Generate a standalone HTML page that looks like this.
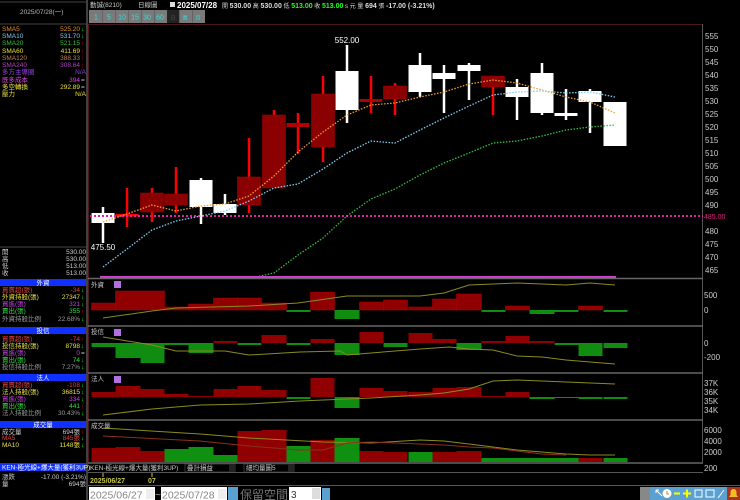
<!DOCTYPE html>
<html><head><meta charset="utf-8"><style>
html,body{margin:0;padding:0;background:#000;width:740px;height:500px;overflow:hidden}
svg{display:block}
text{font-family:"Liberation Sans","Noto Sans CJK TC",sans-serif}
.s{font-size:6.5px}
.ax{font-size:8px;fill:#ccc}
</style></head><body>
<svg width="740" height="500" viewBox="0 0 740 500" xmlns="http://www.w3.org/2000/svg">
<rect width="740" height="500" fill="#000"/>
<line x1="87" y1="0" x2="87" y2="500" stroke="#555" stroke-width="1.5"/>
<line x1="0" y1="2" x2="87" y2="2" stroke="#444"/>
<line x1="0" y1="24" x2="87" y2="24" stroke="#444"/>
<text x="20" y="14" class="s" fill="#bbb">2025/07/28(一)</text>
<g class="s">
<text x="2" y="31" fill="#e0902a">SMA5</text><text x="80" y="31" fill="#e0902a" text-anchor="end">525.20</text><text x="81" y="31" fill="#0f0">↓</text>
<text x="2" y="38" fill="#7ac8e8">SMA10</text><text x="80" y="38" fill="#7ac8e8" text-anchor="end">531.70</text><text x="81" y="38" fill="#0f0">↓</text>
<text x="2" y="45" fill="#2fc03a">SMA20</text><text x="80" y="45" fill="#2fc03a" text-anchor="end">521.15</text><text x="81" y="45" fill="#f00">↑</text>
<text x="2" y="53" fill="#e8e040">SMA60</text><text x="80" y="53" fill="#e8e040" text-anchor="end">411.69</text><text x="81" y="53" fill="#f00">↑</text>
<text x="2" y="60" fill="#c08050">SMA120</text><text x="80" y="60" fill="#c08050" text-anchor="end">388.33</text><text x="81" y="60" fill="#f00">↑</text>
<text x="2" y="67" fill="#b040c0">SMA240</text><text x="80" y="67" fill="#b040c0" text-anchor="end">308.64</text><text x="81" y="67" fill="#f00">↑</text>
<text x="2" y="74" fill="#9040e0">多方主導圈</text><text x="86" y="74" fill="#9040e0" text-anchor="end">N/A</text>
<text x="2" y="82" fill="#e040e0">既多成本</text><text x="80" y="82" fill="#e040e0" text-anchor="end">394</text><text x="81" y="82" fill="#ccc">=</text>
<text x="2" y="89" fill="#e8e040">多空轉換</text><text x="80" y="89" fill="#e8e040" text-anchor="end">292.89</text><text x="81" y="89" fill="#ccc">=</text>
<text x="2" y="96" fill="#e8e040">壓力</text><text x="86" y="96" fill="#e8e040" text-anchor="end">N/A</text>
</g>
<line x1="0" y1="247" x2="87" y2="247" stroke="#444"/>
<g class="s" fill="#ccc">
<text x="2" y="254">開</text><text x="86" y="254" text-anchor="end">530.00</text>
<text x="2" y="261">高</text><text x="86" y="261" text-anchor="end">530.00</text>
<text x="2" y="268">低</text><text x="86" y="268" text-anchor="end">513.00</text>
<text x="2" y="275">收</text><text x="86" y="275" text-anchor="end">513.00</text>
</g>
<g class="s">
<rect x="0" y="279" width="86" height="7" fill="#1030ff"/><text x="43" y="285" fill="#fff" text-anchor="middle">外資</text>
<text x="2" y="292" fill="#e04040">買賣超(張)</text><text x="80" y="292" fill="#e04040" text-anchor="end">-34</text><text x="81" y="292" fill="#0f0">↓</text>
<text x="2" y="299" fill="#e8e040">外資持股(張)</text><text x="80" y="299" fill="#e8e040" text-anchor="end">27347</text><text x="81" y="299" fill="#0f0">↓</text>
<text x="2" y="306" fill="#c040e0">買進(張)</text><text x="80" y="306" fill="#c040e0" text-anchor="end">321</text><text x="81" y="306" fill="#0f0">↓</text>
<text x="2" y="313" fill="#2fe040">賣出(張)</text><text x="80" y="313" fill="#2fe040" text-anchor="end">355</text><text x="81" y="313" fill="#f00">↑</text>
<text x="2" y="321" fill="#999">外資持股比例</text><text x="80" y="321" fill="#999" text-anchor="end">22.68%</text><text x="81" y="321" fill="#0f0">↓</text>
<rect x="0" y="327" width="86" height="7" fill="#1030ff"/><text x="43" y="333" fill="#fff" text-anchor="middle">投信</text>
<text x="2" y="341" fill="#e04040">買賣超(張)</text><text x="80" y="341" fill="#e04040" text-anchor="end">-74</text><text x="81" y="341" fill="#f00">↑</text>
<text x="2" y="348" fill="#e8e040">投信持股(張)</text><text x="80" y="348" fill="#e8e040" text-anchor="end">8798</text><text x="81" y="348" fill="#0f0">↓</text>
<text x="2" y="355" fill="#c040e0">買進(張)</text><text x="80" y="355" fill="#c040e0" text-anchor="end">0</text><text x="81" y="355" fill="#ccc">=</text>
<text x="2" y="362" fill="#2fe040">賣出(張)</text><text x="80" y="362" fill="#2fe040" text-anchor="end">74</text><text x="81" y="362" fill="#0f0">↓</text>
<text x="2" y="369" fill="#999">投信持股比例</text><text x="80" y="369" fill="#999" text-anchor="end">7.27%</text><text x="81" y="369" fill="#0f0">↓</text>
<rect x="0" y="374" width="86" height="7" fill="#1030ff"/><text x="43" y="380" fill="#fff" text-anchor="middle">法人</text>
<text x="2" y="387" fill="#e04040">買賣超(張)</text><text x="80" y="387" fill="#e04040" text-anchor="end">-108</text><text x="81" y="387" fill="#0f0">↓</text>
<text x="2" y="394" fill="#e8e040">法人持股(張)</text><text x="80" y="394" fill="#e8e040" text-anchor="end">36815</text><text x="81" y="394" fill="#0f0">↓</text>
<text x="2" y="401" fill="#c040e0">買進(張)</text><text x="80" y="401" fill="#c040e0" text-anchor="end">334</text><text x="81" y="401" fill="#0f0">↓</text>
<text x="2" y="408" fill="#2fe040">賣出(張)</text><text x="80" y="408" fill="#2fe040" text-anchor="end">441</text><text x="81" y="408" fill="#f00">↑</text>
<text x="2" y="415" fill="#999">法人持股比例</text><text x="80" y="415" fill="#999" text-anchor="end">30.43%</text><text x="81" y="415" fill="#0f0">↓</text>
<rect x="0" y="421" width="86" height="7" fill="#1030ff"/><text x="43" y="427" fill="#fff" text-anchor="middle">成交量</text>
<text x="2" y="434" fill="#ccc">成交量</text><text x="80" y="434" fill="#ccc" text-anchor="end">694張</text><text x="81" y="434" fill="#f00">↑</text>
<text x="2" y="440" fill="#e04040">MA5</text><text x="80" y="440" fill="#e04040" text-anchor="end">845張</text><text x="81" y="440" fill="#0f0">↓</text>
<text x="2" y="447" fill="#e8e040">MA10</text><text x="80" y="447" fill="#e8e040" text-anchor="end">1148張</text><text x="81" y="447" fill="#0f0">↓</text>
<rect x="0" y="463" width="86" height="8" fill="#1030ff"/><text x="2" y="469.5" fill="#fff">KEN-極光線+爆大量(獲利3UP)</text>
<text x="2" y="479" fill="#ccc">漲跌</text><text x="86" y="479" fill="#ccc" text-anchor="end">-17.00 (-3.21%)</text>
<text x="2" y="486" fill="#ccc">量</text><text x="86" y="486" fill="#ccc" text-anchor="end">694張</text>
</g>
<g class="s" fill="#ccc">
<text x="90" y="7">勤誠(8210)</text><text x="138" y="7">日線圖</text>
</g>
<rect x="170" y="2" width="5" height="5" fill="#ddd"/>
<text x="177" y="8" font-size="8" font-weight="bold" fill="#fff">2025/07/28</text>
<text x="222" y="8" font-size="6" fill="#ddd">開 <tspan font-size="7" font-weight="bold">530.00</tspan> 高 <tspan font-size="7" font-weight="bold">530.00</tspan> 低 <tspan font-size="7" font-weight="bold" fill="#2f2">513.00</tspan> 收 <tspan font-size="7" font-weight="bold" fill="#2f2">513.00</tspan> s 元 量 <tspan font-size="7" font-weight="bold">694</tspan> 張 <tspan font-size="7" font-weight="bold">-17.00 (-3.21%)</tspan></text>
<g font-size="7" fill="#30e0e0" text-anchor="middle">
<rect x="89" y="10" width="116" height="13" fill="#7a7a7a"/>
<rect x="167" y="10" width="12" height="13" fill="#222"/>
<text x="96" y="19.5">1</text><text x="109" y="19.5">5</text><text x="122" y="19.5">10</text><text x="135" y="19.5">15</text><text x="147" y="19.5">30</text><text x="160" y="19.5">60</text>
<text x="173" y="19.5" fill="#555" font-size="5">日</text><text x="185" y="19.5" font-size="5">週</text><text x="198" y="19.5" font-size="5">月</text>
<g stroke="#555" stroke-width=".6"><line x1="102.5" y1="10" x2="102.5" y2="23"/><line x1="115.5" y1="10" x2="115.5" y2="23"/><line x1="128.5" y1="10" x2="128.5" y2="23"/><line x1="141.5" y1="10" x2="141.5" y2="23"/><line x1="154.5" y1="10" x2="154.5" y2="23"/><line x1="179.5" y1="10" x2="179.5" y2="23"/><line x1="192.5" y1="10" x2="192.5" y2="23"/></g>
</g>
<line x1="88" y1="24.5" x2="703" y2="24.5" stroke="#4a1820"/>
<line x1="88.5" y1="24" x2="88.5" y2="463" stroke="#4a1820"/>
<line x1="702.5" y1="24" x2="702.5" y2="463" stroke="#555"/>
<g class="ax">
<text x="705" y="39">555</text><text x="705" y="52">550</text><text x="705" y="65">545</text><text x="705" y="78">540</text><text x="705" y="91">535</text><text x="705" y="104">530</text><text x="705" y="117">525</text><text x="705" y="130">520</text><text x="705" y="143">515</text><text x="705" y="156">510</text><text x="705" y="169">505</text><text x="705" y="182">500</text><text x="705" y="195">495</text><text x="705" y="208">490</text><text x="705" y="234">480</text><text x="705" y="247">475</text><text x="705" y="260">470</text><text x="705" y="273">465</text>
</g>
<text x="704" y="219" font-size="7" fill="#e02080">485.00</text>
<line x1="90" y1="216" x2="703" y2="216" stroke="#e020a0" stroke-width="2" stroke-dasharray="2,2"/>
<g>
<g stroke-width="2.5">
<line x1="103" y1="207" x2="103" y2="243" stroke="#fff"/>
<line x1="127" y1="188" x2="127" y2="227" stroke="#f00"/>
<line x1="152" y1="188" x2="152" y2="222" stroke="#f00"/>
<line x1="176" y1="167" x2="176" y2="213" stroke="#f00"/>
<line x1="201" y1="178" x2="201" y2="224" stroke="#fff"/>
<line x1="225" y1="194" x2="225" y2="215" stroke="#fff"/>
<line x1="249" y1="138" x2="249" y2="213" stroke="#f00"/>
<line x1="274" y1="110" x2="274" y2="188" stroke="#f00"/>
<line x1="298" y1="113" x2="298" y2="154" stroke="#f00"/>
<line x1="323" y1="76" x2="323" y2="162" stroke="#f00"/>
<line x1="347" y1="45" x2="347" y2="123" stroke="#fff"/>
<line x1="371" y1="76" x2="371" y2="113" stroke="#f00"/>
<line x1="395" y1="83" x2="395" y2="115" stroke="#f00"/>
<line x1="420" y1="53" x2="420" y2="97" stroke="#fff"/>
<line x1="444" y1="65" x2="444" y2="113" stroke="#fff"/>
<line x1="469" y1="63" x2="469" y2="100" stroke="#fff"/>
<line x1="493" y1="76" x2="493" y2="115" stroke="#f00"/>
<line x1="517" y1="79" x2="517" y2="120" stroke="#fff"/>
<line x1="542" y1="63" x2="542" y2="115" stroke="#fff"/>
<line x1="566" y1="89" x2="566" y2="120" stroke="#fff"/>
<line x1="590" y1="89" x2="590" y2="133" stroke="#fff"/>
</g>
<rect x="91.5" y="213" width="23" height="10" fill="#fff"/>
<rect x="115.5" y="214" width="23" height="2.5" fill="#f00"/>
<rect x="140.5" y="193" width="23" height="19" fill="#8b0000" stroke="#a00" stroke-width=".5"/>
<rect x="164.5" y="194" width="23" height="11" fill="#8b0000" stroke="#a00" stroke-width=".5"/>
<rect x="189.5" y="180" width="23" height="27" fill="#fff"/>
<rect x="213.5" y="204" width="23" height="9" fill="#fff"/>
<rect x="237.5" y="177" width="23" height="28" fill="#8b0000" stroke="#a00" stroke-width=".5"/>
<rect x="262.5" y="115" width="23" height="73" fill="#8b0000" stroke="#a00" stroke-width=".5"/>
<rect x="286.5" y="123" width="23" height="4" fill="#b00000"/>
<rect x="311.5" y="94" width="23" height="53" fill="#8b0000" stroke="#a00" stroke-width=".5"/>
<rect x="335.5" y="71" width="23" height="39" fill="#fff"/>
<rect x="359.5" y="99" width="23" height="3" fill="#b00000"/>
<rect x="383.5" y="86" width="23" height="13" fill="#8b0000" stroke="#a00" stroke-width=".5"/>
<rect x="408.5" y="65" width="23" height="27" fill="#fff"/>
<rect x="432.5" y="73" width="23" height="6" fill="#fff"/>
<rect x="457.5" y="65" width="23" height="6" fill="#fff"/>
<rect x="481.5" y="76" width="23" height="11" fill="#8b0000" stroke="#a00" stroke-width=".5"/>
<rect x="505.5" y="87" width="23" height="10" fill="#fff"/>
<rect x="530.5" y="73" width="23" height="40" fill="#fff"/>
<rect x="554.5" y="113" width="23" height="3" fill="#fff"/>
<rect x="578.5" y="91" width="23" height="11" fill="#fff"/>
<rect x="603.5" y="102" width="23" height="44" fill="#fff"/>
</g>
<line x1="90" y1="216" x2="140" y2="216" stroke="#e020a0" stroke-width="2" stroke-dasharray="2,2"/>
<g fill="none" stroke-width="1.3" stroke-dasharray="1.5,1.5">
<polyline stroke="#f0a030" points="103,222 127,214 152,205 176,211 201,206 225,204 249,196 274,176 298,152 323,132 347,115 371,105 395,103 420,97 444,92 469,84 493,80 517,83 542,90 566,97 590,102 615,113"/>
<polyline stroke="#80d0f0" points="103,267 127,249 152,230 176,221 201,216 225,211 249,201 274,188 298,184 323,169 347,153 371,141 395,143 420,130 444,118 469,106 493,95 517,92 542,91 566,93 590,92 615,97"/>
<polyline stroke="#30c040" points="256,277 274,273 298,255 323,238 347,216 371,199 395,189 420,175 444,163 469,153 493,143 517,141 542,136 566,130 590,127 615,125"/>
</g>
<text x="347" y="43" font-size="8" fill="#fff" text-anchor="middle">552.00</text>
<text x="103" y="250" font-size="8" fill="#fff" text-anchor="middle">475.50</text>
<rect x="100" y="276" width="516" height="2.5" fill="#d040d0"/>
<g stroke="#666" stroke-width="1.5">
<line x1="88" y1="278.5" x2="703" y2="278.5"/><line x1="88" y1="326" x2="703" y2="326"/><line x1="88" y1="373" x2="703" y2="373"/><line x1="88" y1="420" x2="703" y2="420"/><line x1="88" y1="463" x2="703" y2="463"/>
</g>
<g class="s" fill="#ccc"><text x="91" y="287">外資</text><text x="91" y="334">投信</text><text x="91" y="381">法人</text><text x="91" y="428">成交量</text></g>
<g fill="#b070e0"><rect x="114" y="281" width="7" height="7"/><rect x="114" y="329" width="7" height="7"/><rect x="114" y="376" width="7" height="7"/></g>
<g fill="#900000" stroke="#b00000" stroke-width=".5">
<rect x="91.5" y="303" width="24" height="7"/><rect x="115.5" y="291" width="49" height="19"/><rect x="164.5" y="307" width="24" height="3"/><rect x="188.5" y="304" width="25" height="6"/><rect x="213.5" y="298" width="24" height="12"/><rect x="237.5" y="298" width="24" height="12"/><rect x="261.5" y="303" width="25" height="7"/><rect x="310.5" y="292" width="24" height="18"/><rect x="359.5" y="302" width="24" height="8"/><rect x="383.5" y="300" width="24" height="10"/><rect x="408.5" y="307" width="24" height="3"/><rect x="432.5" y="299" width="24" height="11"/><rect x="456.5" y="294" width="25" height="16"/><rect x="505.5" y="306" width="24" height="4"/><rect x="578.5" y="306" width="24" height="4"/>
</g>
<g fill="#108c10"><rect x="286.5" y="310" width="24" height="2"/><rect x="334.5" y="310" width="25" height="9"/><rect x="481.5" y="310" width="24" height="2"/><rect x="529.5" y="310" width="25" height="4"/><rect x="554.5" y="310" width="24" height="2"/><rect x="603.5" y="310" width="24" height="2"/></g>
<polyline fill="none" stroke="#8a8a20" points="103,318 152,311 176,308 249,306 298,303 347,296 420,296 444,293 469,285 493,284 517,283 542,284 566,285 590,283 615,285"/>
<g fill="#108c10"><rect x="91.5" y="343" width="24" height="4"/><rect x="115.5" y="343" width="25" height="15"/><rect x="140.5" y="343" width="24" height="20"/><rect x="164.5" y="343" width="24" height="2"/><rect x="188.5" y="343" width="25" height="10"/><rect x="237.5" y="343" width="24" height="2"/><rect x="286.5" y="343" width="24" height="2"/><rect x="334.5" y="343" width="25" height="12"/><rect x="383.5" y="343" width="24" height="4"/><rect x="456.5" y="343" width="25" height="7"/><rect x="554.5" y="343" width="24" height="2"/><rect x="578.5" y="343" width="24" height="13"/><rect x="603.5" y="343" width="24" height="5"/></g>
<g fill="#900000"><rect x="213.5" y="341" width="24" height="2"/><rect x="261.5" y="335" width="25" height="8"/><rect x="310.5" y="339" width="24" height="4"/><rect x="359.5" y="332" width="24" height="11"/><rect x="408.5" y="333" width="24" height="10"/><rect x="432.5" y="339" width="24" height="4"/><rect x="481.5" y="341" width="24" height="2"/><rect x="505.5" y="336" width="24" height="7"/><rect x="529.5" y="341" width="25" height="2"/></g>
<polyline fill="none" stroke="#8a8a20" points="103,337 152,345 176,351 225,351 249,355 300,352 340,351 347,355 371,353 420,349 449,347 469,349 493,350 517,356 542,357 566,360 590,362 615,364"/>
<g fill="#900000"><rect x="91.5" y="392" width="24" height="5"/><rect x="115.5" y="386" width="25" height="11"/><rect x="140.5" y="389" width="24" height="8"/><rect x="164.5" y="394" width="24" height="3"/><rect x="188.5" y="396" width="25" height="1"/><rect x="213.5" y="389" width="24" height="8"/><rect x="237.5" y="386" width="24" height="11"/><rect x="261.5" y="390" width="25" height="7"/><rect x="310.5" y="378" width="24" height="19"/><rect x="359.5" y="388" width="24" height="9"/><rect x="383.5" y="391" width="24" height="6"/><rect x="408.5" y="392" width="24" height="5"/><rect x="432.5" y="388" width="24" height="9"/><rect x="456.5" y="387" width="25" height="10"/><rect x="481.5" y="396" width="24" height="1"/><rect x="505.5" y="392" width="24" height="5"/></g>
<g fill="#108c10"><rect x="286.5" y="397" width="24" height="2"/><rect x="334.5" y="397" width="25" height="11"/><rect x="529.5" y="397" width="25" height="2"/><rect x="554.5" y="397" width="24" height="1"/><rect x="578.5" y="397" width="24" height="2"/><rect x="603.5" y="397" width="24" height="2"/></g>
<polyline fill="none" stroke="#8a8a20" points="103,415 152,409 200,405 249,404 300,401 347,399 371,398 420,395 444,393 469,389 493,381 517,380 542,381 566,382 615,384"/>
<g fill="#900000"><rect x="91.5" y="448" width="24" height="14"/><rect x="115.5" y="447" width="25" height="15"/><rect x="140.5" y="451" width="24" height="11"/><rect x="237.5" y="431" width="24" height="31"/><rect x="261.5" y="430" width="25" height="32"/><rect x="310.5" y="440" width="24" height="22"/><rect x="359.5" y="451" width="24" height="11"/><rect x="383.5" y="452" width="24" height="10"/><rect x="432.5" y="452" width="24" height="10"/><rect x="456.5" y="451" width="25" height="11"/><rect x="578.5" y="458" width="24" height="4"/></g>
<g fill="#109010"><rect x="164.5" y="449" width="24" height="13"/><rect x="188.5" y="447" width="25" height="15"/><rect x="213.5" y="455" width="24" height="7"/><rect x="286.5" y="446" width="24" height="16"/><rect x="334.5" y="438" width="25" height="24"/><rect x="408.5" y="452" width="24" height="10"/><rect x="481.5" y="458" width="24" height="4"/><rect x="505.5" y="458" width="24" height="4"/><rect x="529.5" y="458" width="25" height="4"/><rect x="554.5" y="458" width="24" height="4"/><rect x="603.5" y="458" width="24" height="4"/></g>
<polyline fill="none" stroke="#8a8a20" points="103,428 200,434 249,438 323,442 371,443 420,440 444,441 469,444 493,447 517,450 542,452 566,454 590,455 615,455"/>
<polyline fill="none" stroke="#8a3020" points="103,436 200,441 249,446 298,450 323,450 347,443 371,442 395,443 420,444 444,445 469,447 493,448 517,451 542,454 566,455"/>
<g class="ax"><text x="704" y="298">500</text><text x="704" y="313">0</text><text x="704" y="346">0</text><text x="704" y="360">-200</text><text x="704" y="386">37K</text><text x="704" y="395">36K</text><text x="704" y="404">35K</text><text x="704" y="413">34K</text><text x="704" y="433">6000</text><text x="704" y="444">4000</text><text x="704" y="455">2000</text><text x="704" y="471">200</text></g>
<line x1="88" y1="472.5" x2="703" y2="472.5" stroke="#555"/>
<g class="s" fill="#ccc"><text x="90" y="470">KEN-極光線+爆大量(獲利3UP)</text></g>
<rect x="185" y="464" width="50" height="8" fill="none" stroke="#555" stroke-width=".6"/><text x="187" y="470" class="s" fill="#ccc">疊計損益</text><rect x="229" y="464" width="6" height="8" fill="#222"/>
<rect x="244" y="464" width="50" height="8" fill="none" stroke="#555" stroke-width=".6"/><text x="246" y="470" class="s" fill="#ccc">細均量圖5</text><rect x="288" y="464" width="6" height="8" fill="#222"/>
<line x1="88" y1="485.5" x2="740" y2="485.5" stroke="#555"/>
<text x="90" y="483" font-size="7" font-weight="bold" fill="#c8c840">2025/06/27</text>
<text x="148" y="483" font-size="7" font-weight="bold" fill="#c8c840">07</text>
<line x1="103" y1="473" x2="103" y2="477" stroke="#c8c840"/><line x1="152" y1="473" x2="152" y2="477" stroke="#c8c840"/>
<rect x="89" y="487" width="66" height="13" fill="#fff"/><text x="90" y="498.5" font-size="10.5" fill="#888" font-family="Liberation Serif">2025/06/27</text><rect x="146" y="489" width="8" height="10" fill="#eee"/>
<text x="155" y="498" font-size="10" fill="#aaa">~</text>
<rect x="161" y="487" width="66" height="13" fill="#fff"/><text x="162" y="498.5" font-size="10.5" fill="#888" font-family="Liberation Serif">2025/07/28</text><rect x="218" y="489" width="8" height="10" fill="#eee"/>
<rect x="228" y="487" width="10" height="13" fill="#5aa0d0"/>
<text x="240" y="499" font-size="12" fill="#777">保留空間</text>
<rect x="289" y="487" width="32" height="13" fill="#fff"/><text x="291" y="498" font-size="10" fill="#333">3</text><rect x="312" y="488" width="8" height="11" fill="#ddd"/>
<rect x="322" y="488" width="8" height="12" fill="#5aa0d0"/>
<rect x="640" y="487" width="10" height="13" fill="#888"/>
<rect x="650" y="487" width="90" height="13" fill="#5aa0d0"/>
<g stroke="#fff" stroke-width="1" fill="none">
<path d="M656 490 L662 496 M656 490 h3 M656 490 v3"/>
<circle cx="667" cy="493.5" r="4" fill="#fff"/><path d="M667 491 v3 h2" stroke="#e08020"/>
<path d="M674 493.5 h6" stroke="#ff0" stroke-width="2"/>
<path d="M683 493.5 h8 M687 489.5 v8" stroke="#ff0" stroke-width="2"/>
<rect x="695" y="490" width="7" height="7"/><rect x="706" y="490" width="8" height="7"/>
<path d="M718 498 l6 -8"/>
</g>
<rect x="727" y="487" width="13" height="13" fill="#b03020"/><path d="M729 497 h9 l-1.5 -2 v-3 a3 3 0 0 0 -6 0 v3 z" fill="#f0c020"/>
</svg>
</body></html>
